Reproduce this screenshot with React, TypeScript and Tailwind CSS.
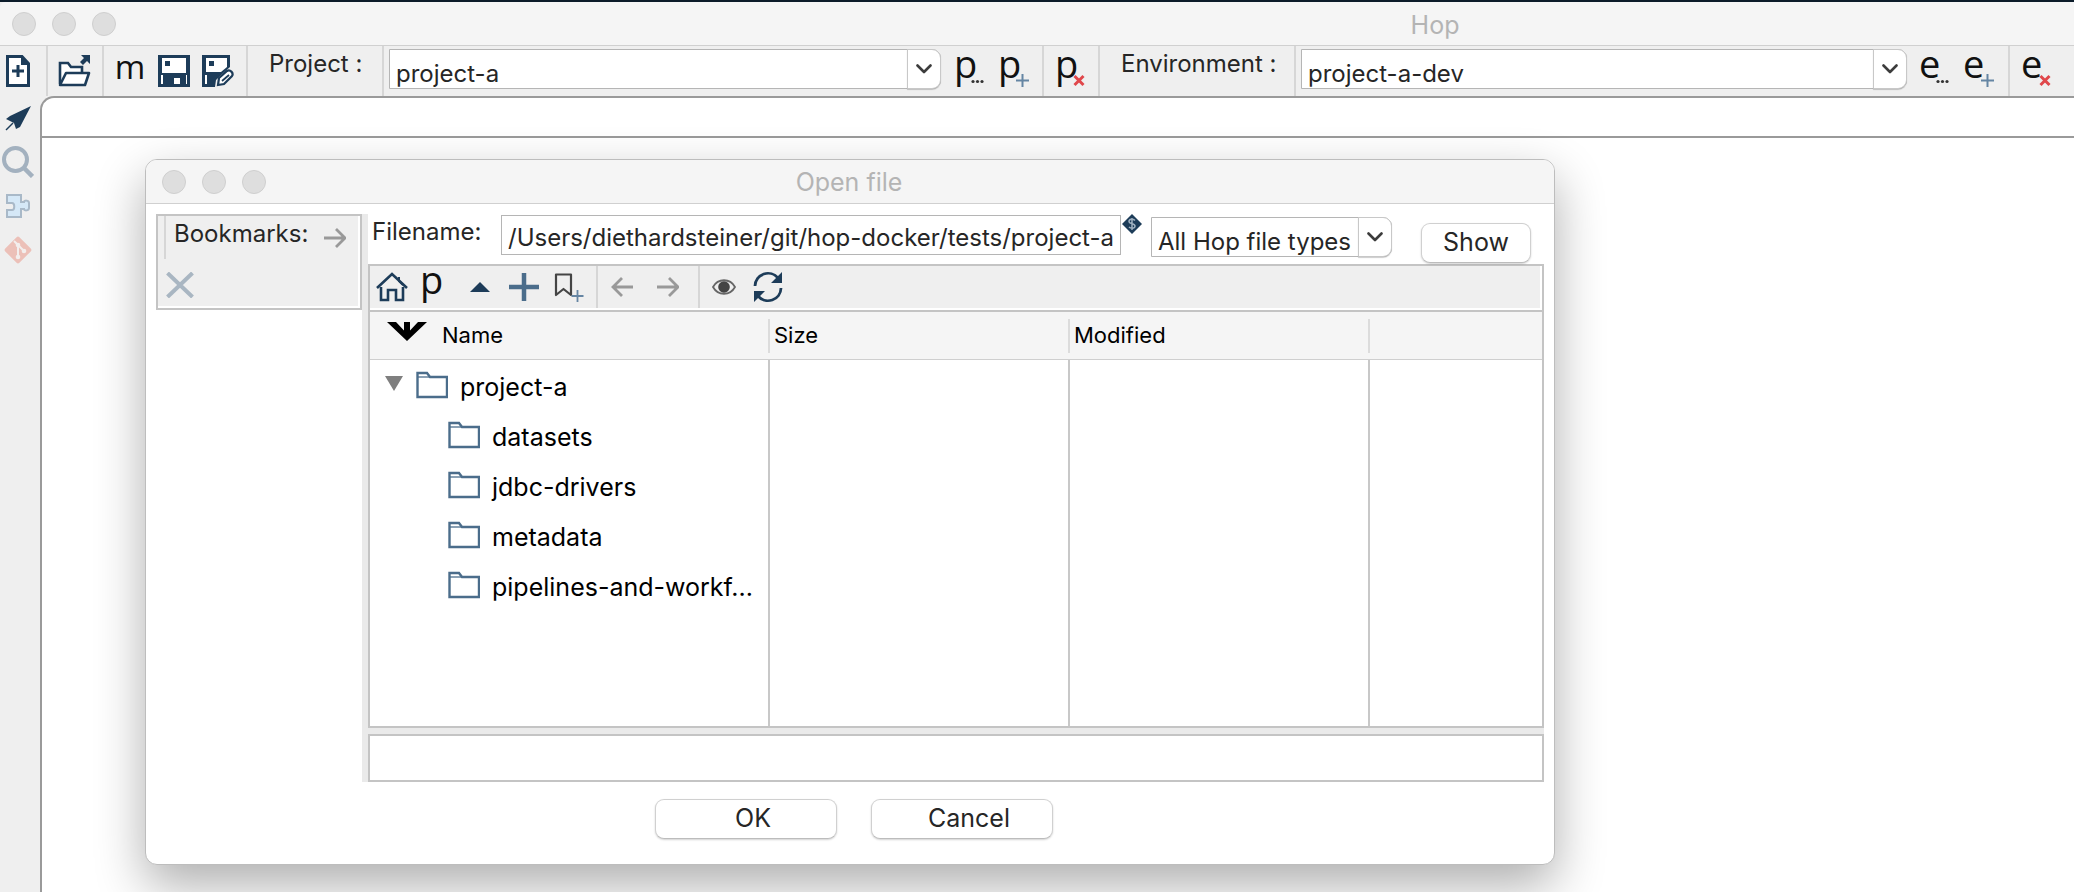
import type { ReactNode } from "react";

const NAVY = "#1d3c59";
const STEEL = "#4b6d8b";

function Svg({ w, h, children }: { w: number; h: number; children: ReactNode }) {
  return (
    <svg width={w} height={h} viewBox={`0 0 ${w} ${h}`} fill="none" aria-hidden="true" className="shrink-0">
      {children}
    </svg>
  );
}

function TrafficLights() {
  const dot = "size-6 rounded-full border border-[#cfcfcf] bg-[#dedede]";
  return (
    <div className="flex gap-4">
      <span className={dot} />
      <span className={dot} />
      <span className={dot} />
    </div>
  );
}

function Sep() {
  return <span className="w-0.5 shrink-0 self-stretch bg-[#d6d6d6]" />;
}

function ToolButton({ label, wide, children }: { label: string; wide?: boolean; children: ReactNode }) {
  return (
    <button
      type="button"
      aria-label={label}
      className={(wide ? "w-[54px]" : "w-11") + " flex h-full shrink-0 items-center justify-center"}
    >
      {children}
    </button>
  );
}

function LetterIcon({ letter, badge }: { letter: "p" | "e"; badge?: "dots" | "plus" | "cross" }) {
  return (
    <span className="relative flex size-8">
      <span className="font-['Open_Sans',sans-serif] text-[38px] leading-[16px] font-medium text-[#111111]">
        {letter}
      </span>
      {badge && (
        <span className="absolute right-0 bottom-0">
          <Svg w={16} h={16}>
            {badge === "dots" && (
              <g fill="#333">
                <circle cx="3" cy="10.5" r="1.6" />
                <circle cx="7.5" cy="10.5" r="1.6" />
                <circle cx="12" cy="10.5" r="1.6" />
              </g>
            )}
            {badge === "plus" && <path d="M8.5 3v13M2 9.5h13" stroke="#6585a3" strokeWidth="2" />}
            {badge === "cross" && <path d="M3.5 5l9 9M12.5 5l-9 9" stroke="#e0474b" strokeWidth="3" />}
          </Svg>
        </span>
      )}
    </span>
  );
}

function Combo({ id, label, value, className }: { id: string; label?: string; value: string; className: string }) {
  return (
    <div className={className + " grid h-10 shrink-0 grid-cols-[1fr_34px]"}>
      <select
        id={id}
        aria-label={label}
        className="col-start-1 col-end-3 row-start-1 h-10 w-full appearance-none rounded-r-[9px] border border-[#b5b5b5] bg-white pt-[9px] pl-[6px] text-[24px] leading-[28px] text-[#262626]"
      >
        <option>{value}</option>
      </select>
      <span className="pointer-events-none col-start-2 row-start-1 flex items-center justify-center rounded-r-[9px] border border-[#c8c8c8] bg-white shadow-[0_1px_1px_rgba(0,0,0,0.2)]">
        <Svg w={16} h={10}>
          <path d="M1.5 1.5L8 8l6.500-6.500" stroke="#3c3c3c" strokeWidth="2.6" strokeLinecap="round" strokeLinejoin="round" />
        </Svg>
      </span>
    </div>
  );
}

function PushButton({ className, children }: { className: string; children: ReactNode }) {
  return (
    <button
      type="button"
      className={
        className +
        " h-10 shrink-0 rounded-[9px] border border-[#d0d0d0] border-b-[#bcbcbc] bg-white pb-0.5 text-[25px] leading-[30px] text-[#262626] shadow-[0_1px_2px_rgba(0,0,0,0.18)]"
      }
    >
      {children}
    </button>
  );
}

function FolderIcon() {
  return (
    <Svg w={32} h={28}>
      <path d="M1.500 26V2H11l3 4H31v20z" fill="#fff" stroke={STEEL} strokeWidth="2.4" />
      <path d="M2 6h12" stroke={STEEL} strokeWidth="1.300" />
    </Svg>
  );
}

function ArrowRight() {
  return (
    <Svg w={22} h={22}>
      <path d="M0 11h20M12 2l9 9-9 9" stroke="#999" strokeWidth="2.8" />
    </Svg>
  );
}

function MainToolbar() {
  return (
    <div className="flex h-[50px] shrink-0">
      <div className="w-[46px] shrink-0 pr-[10px]">
        <button type="button" aria-label="New" className="flex h-full w-9 items-center justify-center">
          <Svg w={24} h={32}>
            <path d="M1.500 1.500H16l6.500 7V30.500H1.500z" fill="#fff" stroke={NAVY} strokeWidth="3" />
            <path d="M15 1l8 9h-8z" fill={NAVY} />
            <path d="M12 10v12M6 16h12" stroke={NAVY} strokeWidth="3" />
          </Svg>
        </button>
      </div>
      <Sep />
      <ToolButton label="Open" wide>
        <Svg w={34} h={32}>
          <path d="M2 29V8h8l3 4h11v6" fill="#fff" stroke={NAVY} strokeWidth="2.600" />
          <path d="M2 30l6-12h23l-4 12z" fill="#fff" stroke={NAVY} strokeWidth="2.600" strokeLinejoin="round" />
          <path d="M23 0h9v9l-3-3-4 4-3-3 4-4z" fill={NAVY} />
        </Svg>
      </ToolButton>
      <Sep />
      <div className="flex shrink-0 pr-[6px] pl-1">
        <ToolButton label="Metadata">
          <span className="flex h-8 font-['Open_Sans',sans-serif] text-[33px] leading-[24px] font-medium text-[#111111]">
            m
          </span>
        </ToolButton>
        <ToolButton label="Save">
          <Svg w={32} h={32}>
            <path d="M0 0h32v32H0z" fill={NAVY} />
            <path d="M4 3h24v15H4z" fill="#fff" />
            <path d="M7 6h5v5H7zM15 23h7v6h-7z" fill={NAVY} />
            <path d="M16 23h6v6h-6z" fill="#fff" />
            <path d="M3 20h2v9H3zM28 20h1v9h-1z" fill="#fff" />
          </Svg>
        </ToolButton>
        <ToolButton label="Save as">
          <Svg w={32} h={32}>
            <path d="M0 0h28v12l-9 8-5 5-1 7H0z" fill={NAVY} />
            <path d="M4 3h21v9l-6 5H4z" fill="#fff" />
            <path d="M7 6h5v5H7z" fill={NAVY} />
            <path d="M3 20h2v9H3z" fill="#fff" />
            <path d="M16 30l1-7 8-7c3-2 7 2 5 5l-8 8z" fill="#fff" stroke={NAVY} strokeWidth="2.200" />
            <path d="M20 26l7-6" stroke={NAVY} strokeWidth="1.800" />
          </Svg>
        </ToolButton>
      </div>
      <Sep />
      <label htmlFor="project" className="w-[134px] shrink-0 pl-[21px] text-[24px] leading-[36px]">
        Project :
      </label>
      <Sep />
      <div className="flex shrink-0 pr-[6px] pl-[5px]">
        <div className="pt-[3px] pr-[7px]">
          <Combo id="project" value="project-a" className="w-[552px]" />
        </div>
        <ToolButton label="Edit project">
          <LetterIcon letter="p" badge="dots" />
        </ToolButton>
        <ToolButton label="Add project">
          <LetterIcon letter="p" badge="plus" />
        </ToolButton>
      </div>
      <Sep />
      <ToolButton label="Delete project" wide>
        <LetterIcon letter="p" badge="cross" />
      </ToolButton>
      <Sep />
      <label htmlFor="environment" className="w-[194px] shrink-0 pl-[21px] text-[24px] leading-[36px]">
        Environment :
      </label>
      <Sep />
      <div className="flex shrink-0 pr-[7px] pl-[5px]">
        <div className="pt-[3px] pr-[6px]">
          <Combo id="environment" value="project-a-dev" className="w-[606px]" />
        </div>
        <ToolButton label="Edit environment">
          <LetterIcon letter="e" badge="dots" />
        </ToolButton>
        <ToolButton label="Add environment">
          <LetterIcon letter="e" badge="plus" />
        </ToolButton>
      </div>
      <Sep />
      <ToolButton label="Delete environment" wide>
        <LetterIcon letter="e" badge="cross" />
      </ToolButton>
    </div>
  );
}

function SideRail() {
  const cell = "flex h-11 w-9 items-center justify-center";
  return (
    <nav aria-label="Perspectives" className="w-10 shrink-0">
      <button type="button" aria-label="Data orchestration" className={cell}>
        <Svg w={26} h={26}>
          <path d="M26 1L15 22l-4 2-2-6-8-4 4-3z" fill={NAVY} />
          <path d="M1 25l7-7" stroke={NAVY} strokeWidth="1.500" />
        </Svg>
      </button>
      <button type="button" aria-label="Search" className={cell}>
        <Svg w={32} h={32}>
          <circle cx="13.500" cy="13.500" r="11.500" stroke="#a3b1bf" strokeWidth="4" />
          <path d="M22 22l8.500 8.500" stroke="#a3b1bf" strokeWidth="4.500" />
        </Svg>
      </button>
      <button type="button" aria-label="Plugins" className={cell}>
        <Svg w={24} h={24}>
          <path
            d="M1 1h14v7h3c0-2 5-2 5 1v5c0 3-5 3-5 1h-3v8H1v-7h5c3 0 3-7 0-7H1z"
            fill="#d5e8f7"
            stroke="#a9b9c8"
            strokeWidth="2"
          />
        </Svg>
      </button>
      <button type="button" aria-label="Git" className={cell}>
        <Svg w={30} h={30}>
          <rect x="5" y="5" width="20" height="20" rx="2" transform="rotate(45 15 15)" fill="#ecc0b8" />
          <path d="M11 6l4 4v13M15 10l6 6" stroke="#f3eeed" strokeWidth="2" />
          <circle cx="15" cy="10" r="2.300" fill="#f3eeed" />
          <circle cx="15" cy="22" r="2.300" fill="#f3eeed" />
          <circle cx="21" cy="16" r="2.300" fill="#f3eeed" />
        </Svg>
      </button>
    </nav>
  );
}

function BrowserToolbar() {
  return (
    <div className="border-2 border-[#c4c4c4] bg-white pr-0.5 pb-0.5">
      <div className="flex h-[42px] bg-[#efefef]">
        <div className="flex pr-[6px]">
          <ToolButton label="Home">
            <Svg w={32} h={30}>
              <path d="M1 16L16 2l15 14" stroke={NAVY} strokeWidth="2.600" />
              <path d="M5 15v13h7V18h8v10h7V15" stroke={NAVY} strokeWidth="2.600" />
              <path d="M23 5v4l4 4" stroke={NAVY} strokeWidth="2" />
            </Svg>
          </ToolButton>
          <ToolButton label="Project home">
            <LetterIcon letter="p" />
          </ToolButton>
          <ToolButton label="Up">
            <Svg w={20} h={10}>
              <path d="M0 10L10 0l10 10z" fill={NAVY} />
            </Svg>
          </ToolButton>
          <ToolButton label="New folder">
            <Svg w={30} h={28}>
              <path d="M15 0v28M0 14h30" stroke={STEEL} strokeWidth="4.500" />
            </Svg>
          </ToolButton>
          <ToolButton label="Add bookmark">
            <Svg w={32} h={30}>
              <path d="M4 2.500h15V23l-7.500-6L4 23z" stroke="#444" strokeWidth="2.200" strokeLinejoin="round" />
              <path d="M25.500 18v12M19.500 24h12" stroke="#6585a3" strokeWidth="1.800" />
            </Svg>
          </ToolButton>
        </div>
        <Sep />
        <div className="flex pr-2 pl-0.5">
          <ToolButton label="Back">
            <Svg w={22} h={22}>
              <path d="M22 11H2M11 2l-9 9 9 9" stroke="#999" strokeWidth="2.800" />
            </Svg>
          </ToolButton>
          <div className="pl-0.5">
            <ToolButton label="Forward">
              <ArrowRight />
            </ToolButton>
          </div>
        </div>
        <Sep />
        <div className="flex pl-0.5">
          <ToolButton label="Show hidden files">
            <Svg w={24} h={16}>
              <path d="M1 8c5-9 17-9 22 0-5 9-17 9-22 0z" stroke="#666" strokeWidth="1.800" />
              <circle cx="12" cy="8" r="5.800" fill="#444" />
            </Svg>
          </ToolButton>
          <ToolButton label="Refresh">
            <Svg w={32} h={32}>
              <path d="M3 15A13 13 0 0 1 26 7M29 17A13 13 0 0 1 6 25" stroke={NAVY} strokeWidth="2.800" />
              <path d="M30 1v11H19zM2 31V20h11z" fill={NAVY} />
            </Svg>
          </ToolButton>
        </div>
      </div>
    </div>
  );
}

const folders = ["datasets", "jdbc-drivers", "metadata", "pipelines-and-workf..."];

function EmptyCells() {
  return (
    <>
      <td className="border-r-2 border-[#c8c8c8]" />
      <td className="border-r-2 border-[#c8c8c8]" />
      <td />
    </>
  );
}

function FileTable() {
  const head = "flex h-[34px] items-center border-r-2 border-[#dcdcdc] pl-1 text-[22px]";
  const name = "flex h-[50px] items-center";
  return (
    <table className="w-full table-fixed border-separate border-spacing-0 border-2 border-t-0 border-[#c4c4c4] text-black">
      <colgroup>
        <col className="w-[400px]" />
        <col className="w-[300px]" />
        <col className="w-[300px]" />
        <col />
      </colgroup>
      <thead className="bg-[#f5f5f5] text-left">
        <tr className="h-12">
          <th className="border-b border-[#cfcfcf] p-0 font-normal">
            <div className="flex h-[34px] items-center gap-[15px] border-r-2 border-[#dcdcdc] pl-[17px] text-[22px]">
              <span className="pb-2">
                <Svg w={40} h={19}>
                  <path d="M0 0h9l8 8.500V0h6v8.500L31 0h9L20 19z" fill="#000" />
                </Svg>
              </span>
              Name
            </div>
          </th>
          <th className="border-b border-[#cfcfcf] p-0 font-normal">
            <div className={head}>Size</div>
          </th>
          <th className="border-b border-[#cfcfcf] p-0 font-normal">
            <div className={head}>Modified</div>
          </th>
          <th className="border-b border-[#cfcfcf] p-0" />
        </tr>
      </thead>
      <tbody className="text-[25px] leading-[30px]">
        <tr>
          <td className="border-r-2 border-[#c8c8c8] p-0">
            <div className={name + " pl-[15px]"}>
              <button type="button" aria-label="Collapse project-a" className="mr-[13px] pb-1">
                <Svg w={18} h={15}>
                  <path d="M0 0h18L9 15z" fill="#7f7f7f" />
                </Svg>
              </button>
              <FolderIcon />
              <span className="pt-[3px] pl-3">project-a</span>
            </div>
          </td>
          <EmptyCells />
        </tr>
        {folders.map((folder) => (
          <tr key={folder}>
            <td className="border-r-2 border-[#c8c8c8] p-0">
              <div className={name + " pl-[78px]"}>
                <FolderIcon />
                <span className="pt-[3px] pl-3">{folder}</span>
              </div>
            </td>
            <EmptyCells />
          </tr>
        ))}
        <tr>
          <td className="h-[116px] border-r-2 border-[#c8c8c8]" />
          <EmptyCells />
        </tr>
      </tbody>
    </table>
  );
}

function OpenFileDialog() {
  return (
    <section
      role="dialog"
      aria-labelledby="dialog-title"
      className="absolute top-[157px] right-[519px] left-[145px] min-w-[1180px] overflow-hidden rounded-[12px] border border-[#bdbdbd] bg-white shadow-[0_20px_50px_rgba(0,0,0,0.32)]"
    >
      <header className="grid h-11 grid-cols-[1fr_auto_1fr] items-center border-b border-[#d0d0d0] bg-[#f5f5f5] px-4">
        <TrafficLights />
        <h2 id="dialog-title" className="pt-px pr-0.5 text-[25px] leading-[30px] text-[#b4b4b4]">
          Open file
        </h2>
      </header>
      <div className="flex px-[10px] pt-[10px]">
        <aside className="w-[206px] shrink-0">
          <div className="border-2 border-[#c4c4c4] bg-white pr-0.5 pb-0.5">
            <div className="h-[90px] bg-[#efefef] pl-[6px]">
              <div className="flex h-[43px]">
                <Sep />
                <span className="w-[150px] pl-2 text-[24px] leading-[36px]">Bookmarks:</span>
                <button type="button" aria-label="Go to bookmark" className="flex items-center pl-2">
                  <ArrowRight />
                </button>
              </div>
              <button type="button" aria-label="Remove bookmark" className="flex h-[47px] items-center pt-1 pl-0.5">
                <Svg w={28} h={26}>
                  <path d="M1.500 1l25 24M26.500 1l-25 24" stroke="#a9b6c2" strokeWidth="4" />
                </Svg>
              </button>
            </div>
          </div>
        </aside>
        <div className="w-[6px] shrink-0 bg-[#eaeaea]" />
        <div className="min-w-0 flex-1">
          <div className="flex h-[50px] pr-[13px]">
            <label htmlFor="filename" className="w-[133px] shrink-0 pl-1 text-[24px] leading-[36px]">
              Filename:
            </label>
            <div className="min-w-0 flex-1 pt-px">
              <input
                id="filename"
                type="text"
                defaultValue="/Users/diethardsteiner/git/hop-docker/tests/project-a"
                className="h-10 w-full border border-[#b5b5b5] bg-white pt-[5px] pl-[6px] text-[24px] leading-[30px] text-[#262626]"
              />
            </div>
            <div className="w-[30px] shrink-0 pl-px">
              <Svg w={20} h={20}>
                <path d="M10 0l10 10-10 10L0 10z" fill={NAVY} />
                <path d="M13 6.500c-2-2-6-1.500-6 1s6 2 6 4.500-4 3-6 1M10 4v12" stroke="#9fb0c0" strokeWidth="1.500" />
              </Svg>
            </div>
            <div className="pt-[3px] pr-[29px]">
              <Combo id="file-type" label="File type" value="All Hop file types" className="w-[241px]" />
            </div>
            <div className="pt-[9px]">
              <PushButton className="w-[110px]">Show</PushButton>
            </div>
          </div>
          <BrowserToolbar />
          <FileTable />
          <div className="h-[6px] bg-[#eaeaea]" />
          <input
            type="text"
            readOnly
            aria-label="Details"
            className="block h-12 w-full border-2 border-[#c4c4c4] bg-white px-2 text-[24px]"
          />
        </div>
      </div>
      <footer className="flex justify-center gap-[34px] pt-[17px] pb-[25px] pl-2">
        <PushButton className="w-[182px] pl-[14px]">OK</PushButton>
        <PushButton className="w-[182px] pl-[14px]">Cancel</PushButton>
      </footer>
    </section>
  );
}

export default function App() {
  return (
    <main className="relative flex min-h-screen flex-col overflow-hidden border-t-2 border-[#0c1c2a] bg-[#efefef] font-['Inter',sans-serif] text-[#262626]">
      <header className="grid h-11 w-[138%] shrink-0 grid-cols-[1fr_auto_1fr] items-center rounded-tl-[6px] border-b border-[#d0d0d0] bg-[#f5f5f5] pr-1 pl-3">
        <TrafficLights />
        <h1 className="pt-0.5 text-[25px] leading-[30px] text-[#b4b4b4]">Hop</h1>
      </header>
      <MainToolbar />
      <div className="flex flex-1">
        <SideRail />
        <div className="flex-1 rounded-tl-[14px] border-t-2 border-l-2 border-[#9a9a9a] bg-white">
          <div className="h-10 border-b-2 border-[#9a9a9a]" />
        </div>
      </div>
      <OpenFileDialog />
    </main>
  );
}
